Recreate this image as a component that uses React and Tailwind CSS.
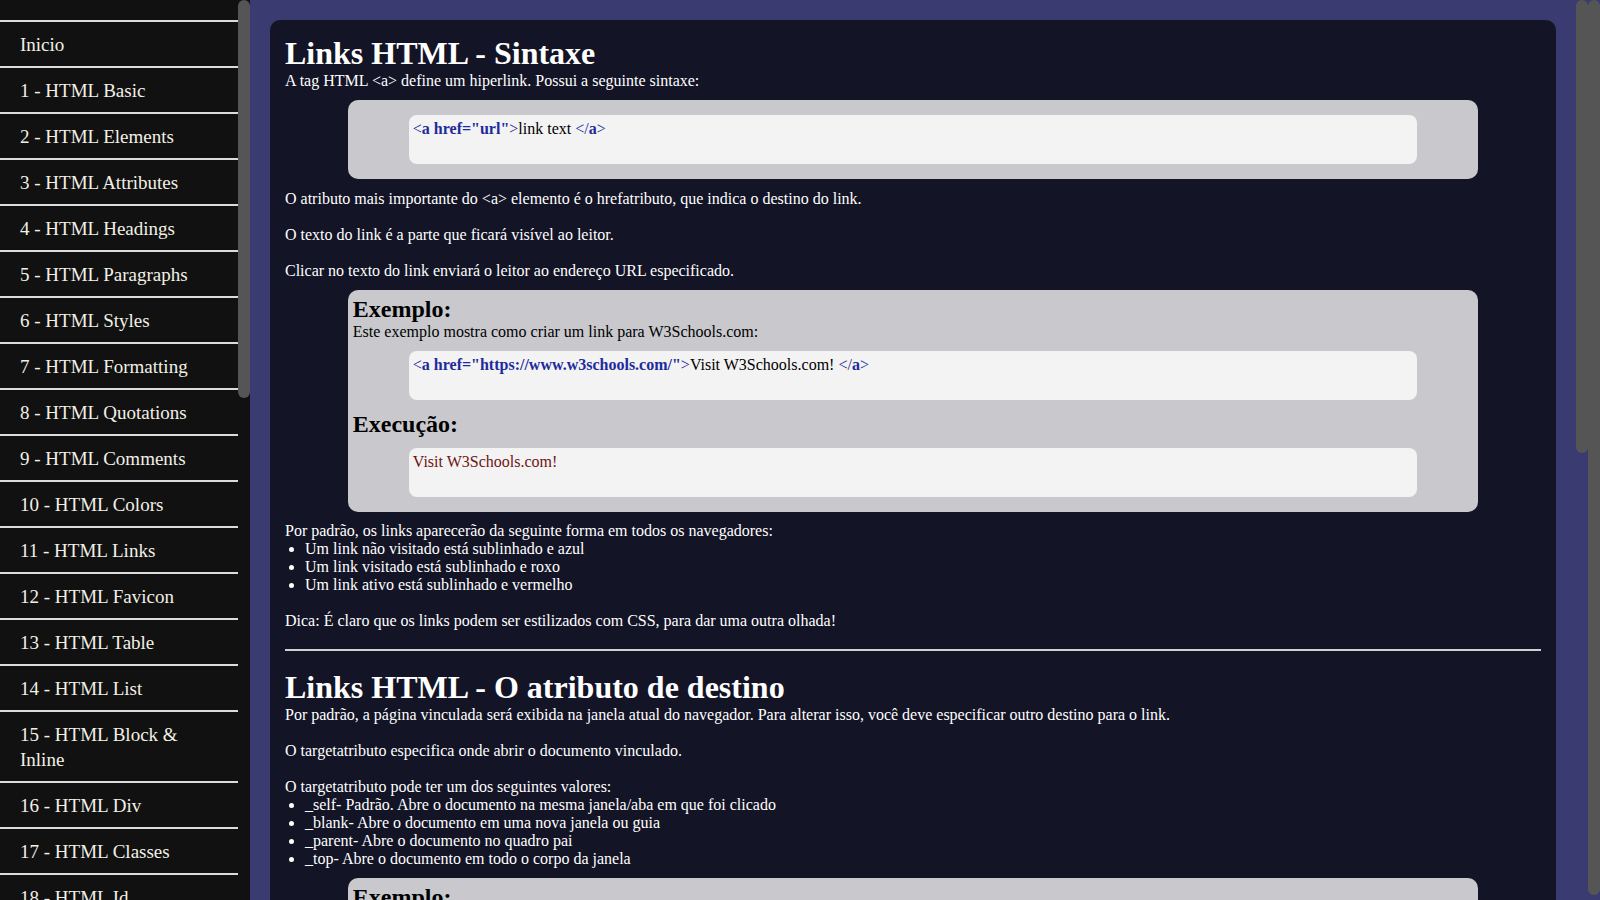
import React from 'react';

const menu = [
  'Inicio',
  '1 - HTML Basic',
  '2 - HTML Elements',
  '3 - HTML Attributes',
  '4 - HTML Headings',
  '5 - HTML Paragraphs',
  '6 - HTML Styles',
  '7 - HTML Formatting',
  '8 - HTML Quotations',
  '9 - HTML Comments',
  '10 - HTML Colors',
  '11 - HTML Links',
  '12 - HTML Favicon',
  '13 - HTML Table',
  '14 - HTML List',
  '15 - HTML Block & Inline',
  '16 - HTML Div',
  '17 - HTML Classes',
  '18 - HTML Id',
  '19 - HTML Iframes',
];

// caixa cinza de exemplo
const Box = ({ children }) => (
  <div className="mx-auto my-[10px] w-[90%] rounded-[10px] bg-[#c9c9cd] p-[5px] text-black">
    {children}
  </div>
);

// bloco branco de código
const Code = ({ children }) => (
  <div className="mx-[56px] my-[10px] h-[49px] rounded-[8px] bg-[#f3f3f4] px-[4px] pt-[5px]">
    {children}
  </div>
);

const Tag = ({ open = true, attr }) => (
  <span className="text-[#1d2b9c]">
    {open ? '<' : '</'}
    <b>a{attr}</b>
    {'>'}
  </span>
);

const App = () => {
  return (
    <div className="flex h-screen w-full overflow-hidden font-['Liberation_Serif',serif] text-[16px] leading-[18px]">
      {/* Sidebar */}
      <aside className="flex w-[250px] shrink-0 bg-[#111111]">
        <ul className="mt-[20px] w-[238px] border-t-2 border-[#dcdcdc]">
          {menu.map((item) => (
            <li
              key={item}
              className="border-b-2 border-[#dcdcdc] pb-[9px] pl-[20px] pr-[20px] pt-[10px] text-[19px] leading-[25px] text-[#f2f0e6]"
            >
              {item}
            </li>
          ))}
        </ul>
        <div className="w-[12px]">
          <div className="h-[398px] rounded-full bg-[#555555]" />
        </div>
      </aside>

      {/* Conteúdo */}
      <main className="min-w-0 flex-1 bg-[#3a3b70] px-[20px] pt-[20px]">
        <div className="rounded-[10px] bg-[#131426] p-[15px] text-white">
          <h1 className="text-[32px] font-bold leading-[37px]">Links HTML - Sintaxe</h1>
          <p>A tag HTML &lt;a&gt; define um hiperlink. Possui a seguinte sintaxe:</p>
          <Box>
            <Code>
              <Tag attr={' href="url"'} />
              link text <Tag open={false} />
            </Code>
          </Box>
          <p className="mt-[11px]">
            O atributo mais importante do &lt;a&gt; elemento é o hrefatributo, que indica o destino do link.
            <br />
            <br />
            O texto do link é a parte que ficará visível ao leitor.
            <br />
            <br />
            Clicar no texto do link enviará o leitor ao endereço URL especificado.
          </p>
          <Box>
            <h2 className="text-[24px] font-bold leading-[28px]">Exemplo:</h2>
            <p>Este exemplo mostra como criar um link para W3Schools.com:</p>
            <Code>
              <Tag attr={' href="https://www.w3schools.com/"'} />
              Visit W3Schools.com! <Tag open={false} />
            </Code>
            <h2 className="text-[24px] font-bold leading-[28px]">Execução:</h2>
            <Code>
              <span className="text-[#6e1313]">Visit W3Schools.com!</span>
            </Code>
          </Box>
          <p>Por padrão, os links aparecerão da seguinte forma em todos os navegadores:</p>
          <ul className="list-disc pl-[20px]">
            <li>Um link não visitado está sublinhado e azul</li>
            <li>Um link visitado está sublinhado e roxo</li>
            <li>Um link ativo está sublinhado e vermelho</li>
          </ul>
          <br />
          <p>Dica: É claro que os links podem ser estilizados com CSS, para dar uma outra olhada!</p>
          <hr className="mb-[18px] mt-[19px] border-t-2 border-[#d0d0d0]" />
          <h1 className="text-[32px] font-bold leading-[37px]">Links HTML - O atributo de destino</h1>
          <p>
            Por padrão, a página vinculada será exibida na janela atual do navegador. Para alterar isso, você deve especificar outro destino para o link.
            <br />
            <br />
            O targetatributo especifica onde abrir o documento vinculado.
            <br />
            <br />
            O targetatributo pode ter um dos seguintes valores:
          </p>
          <ul className="list-disc pl-[20px]">
            <li>_self- Padrão. Abre o documento na mesma janela/aba em que foi clicado</li>
            <li>_blank- Abre o documento em uma nova janela ou guia</li>
            <li>_parent- Abre o documento no quadro pai</li>
            <li>_top- Abre o documento em todo o corpo da janela</li>
          </ul>
          <Box>
            <h2 className="text-[24px] font-bold leading-[28px]">Exemplo:</h2>
            <p>Este exemplo abre o documento vinculado em uma nova janela ou guia:</p>
            <Code>
              <Tag attr={' href="https://www.w3schools.com/" target="_blank"'} />
              Visit W3Schools! <Tag open={false} />
            </Code>
          </Box>
        </div>
      </main>

      {/* Barras de rolagem */}
      <div className="w-[12px] shrink-0 bg-[#3a3b70]">
        <div className="h-[453px] rounded-full bg-[#555555]" />
      </div>
      <div className="w-[12px] shrink-0 bg-[#3a3b70]">
        <div className="h-[895px] rounded-full bg-[#555555]" />
      </div>
    </div>
  );
};

export default App;
